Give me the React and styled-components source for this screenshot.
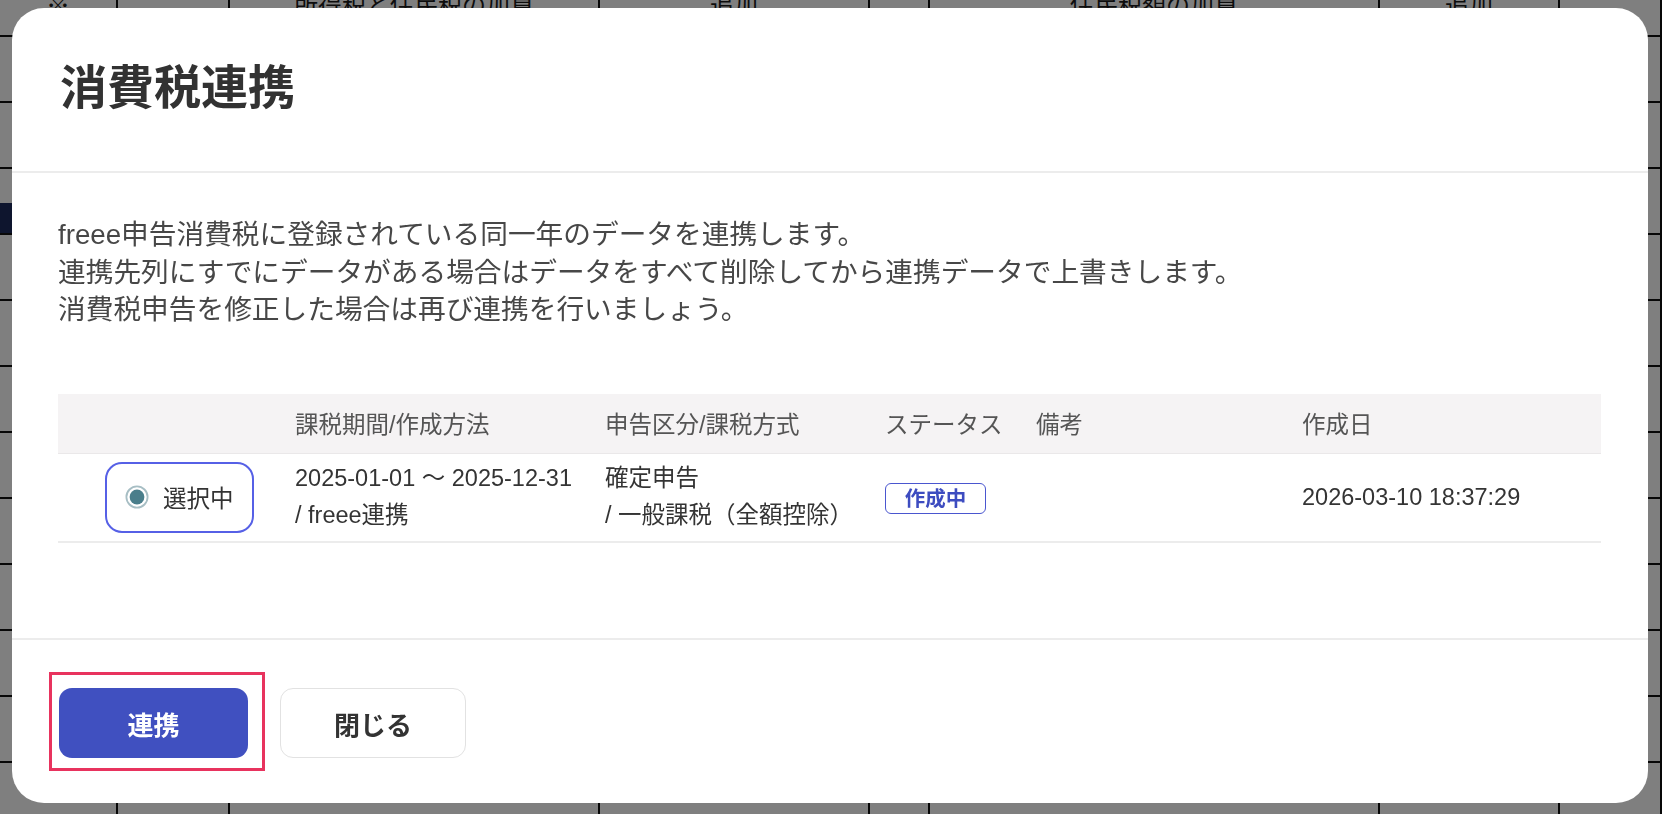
import React from 'react'
import styled, { createGlobalStyle } from 'styled-components'

const GlobalStyle = createGlobalStyle`
  html, body {
    margin: 0;
    padding: 0;
    background: #ffffff;
    overflow: hidden;
  }
  body {
    font-family: "Liberation Sans", "Noto Sans CJK JP", sans-serif;
  }
`

const bgRows = [
  ['※', '', '所得税と住民税の加算', '追加', '', '住民税額の加算', '追加', ''],
  ['', '', '', '', '', '', '', ''],
  ['', '', '', '', '', '', '', '0'],
  ['', '', '', '', '', '', '', ''],
  ['', '', '', '', '', '', '', ''],
  ['', '', '', '', '', '', '', ''],
  ['', '', '', '', '', '', '', ''],
  ['', '', '', '', '', '', '', ''],
  ['', '', '', '', '', '', '', ''],
  ['', '', '', '', '', '', '', ''],
  ['', '', '', '', '', '', '', ''],
  ['', '', '', '', '', '', '', ''],
  ['', '', '', '', '', '', '', ''],
]

export default function App() {
  return (
    <>
      <GlobalStyle />
      <Page>
        {bgRows.map((row, i) => (
          <BgRow key={i}>
            {row.map((txt, j) => (
              <BgCell key={j} $marker={i === 3 && j === 0}>{txt}</BgCell>
            ))}
          </BgRow>
        ))}
      </Page>

      <Overlay>
        <Modal>
          <Header>
            <Title>消費税連携</Title>
          </Header>

          <Body>
            <Intro>
              freee申告消費税に登録されている同一年のデータを連携します。<br />
              連携先列にすでにデータがある場合はデータをすべて削除してから連携データで上書きします。<br />
              消費税申告を修正した場合は再び連携を行いましょう。
            </Intro>

            <Table>
              <HeadRow>
                <HeadCell />
                <HeadCell>課税期間/作成方法</HeadCell>
                <HeadCell>申告区分/課税方式</HeadCell>
                <HeadCell>ステータス</HeadCell>
                <HeadCell>備考</HeadCell>
                <HeadCell>作成日</HeadCell>
              </HeadRow>

              <DataRow>
                <SelectCell>
                  <RadioPill>
                    <RadioIcon width="24" height="24" viewBox="0 0 24 24">
                      <circle cx="12" cy="12" r="10.6" fill="#fff" stroke="#a7bec4" strokeWidth="1.8" />
                      <circle cx="12" cy="12" r="7.4" fill="#4a7e8b" />
                    </RadioIcon>
                    選択中
                  </RadioPill>
                </SelectCell>
                <Cell>
                  2025-01-01 ～ 2025-12-31<br />
                  / freee連携
                </Cell>
                <Cell>
                  確定申告<br />
                  / 一般課税（全額控除）
                </Cell>
                <Cell>
                  <Badge>作成中</Badge>
                </Cell>
                <Cell />
                <Cell>2026-03-10 18:37:29</Cell>
              </DataRow>
            </Table>
          </Body>

          <Footer>
            <Focus>
              <Button $primary>連携</Button>
              <FocusRing />
            </Focus>
            <Button>閉じる</Button>
          </Footer>
        </Modal>
      </Overlay>
    </>
  )
}

const Page = styled.div`
  margin-top: -29px;
  display: flex;
  flex-direction: column;
`

const BgRow = styled.div`
  display: grid;
  grid-template-columns: 118px 112px 370px 270px 60px 450px 180px 1fr;
  height: 66px;
  border-bottom: 2px solid #111;
  box-sizing: border-box;
`

const BgCell = styled.div`
  display: flex;
  align-items: center;
  justify-content: center;
  border-right: 2px solid #111;
  font-size: 24px;
  color: #1a1a1a;
  background: ${p => (p.$marker ? 'linear-gradient(#1d2a5c, #1d2a5c) left bottom / 12px 30px no-repeat' : 'transparent')};

  &:last-child {
    justify-content: flex-start;
    padding-left: 12px;
  }
`

const Overlay = styled.div`
  position: fixed;
  inset: 0;
  background: rgba(0, 0, 0, 0.5);
  display: flex;
  padding: 8px 14px 11px 12px;
  box-sizing: border-box;
`

const Modal = styled.div`
  flex: 1;
  display: flex;
  flex-direction: column;
  background: #ffffff;
  border-radius: 32px;
  overflow: hidden;
`

const Header = styled.div`
  height: 165px;
  flex-shrink: 0;
  display: flex;
  align-items: center;
  padding: 0 48px 4px;
  border-bottom: 2px solid #ececec;
  box-sizing: border-box;
`

const Title = styled.h2`
  margin: 0;
  font-size: 47px;
  font-weight: 700;
  color: #323232;
  line-height: 1;
`

const Body = styled.div`
  flex: 1;
  padding: 43px 47px 0 46px;
`

const Intro = styled.p`
  margin: 0;
  font-size: 27.7px;
  line-height: 37.5px;
  color: #474747;
`

const Table = styled.div`
  margin-top: 65px;
`

const rowGrid = `
  display: grid;
  grid-template-columns: 237px 310px 280px 151px 266px 1fr;
  align-items: center;
  box-sizing: border-box;
`

const HeadRow = styled.div`
  ${rowGrid}
  height: 60px;
  background: #f5f3f4;
  border-bottom: 1px solid #eae8e9;
`

const HeadCell = styled.div`
  font-size: 23.5px;
  color: #555555;
`

const DataRow = styled.div`
  ${rowGrid}
  height: 89px;
  border-bottom: 2px solid #ececec;
`

const Cell = styled.div`
  font-size: 23.5px;
  line-height: 37px;
  color: #343434;
`

const SelectCell = styled.div`
  padding-left: 47px;
`

const RadioPill = styled.div`
  width: 149px;
  height: 71px;
  box-sizing: border-box;
  border: 2.5px solid #5660e6;
  border-radius: 17px;
  display: flex;
  align-items: center;
  padding-left: 18px;
  gap: 14px;
  font-size: 23.5px;
  color: #333333;
`

const RadioIcon = styled.svg`
  flex-shrink: 0;
`

const Badge = styled.span`
  display: inline-flex;
  align-items: center;
  justify-content: center;
  width: 101px;
  height: 31px;
  box-sizing: border-box;
  border: 1.5px solid #4a56cf;
  border-radius: 6px;
  font-size: 20.5px;
  font-weight: 700;
  color: #3d4cc0;
  vertical-align: middle;
`

const Footer = styled.div`
  height: 165px;
  flex-shrink: 0;
  display: flex;
  align-items: center;
  gap: 32px;
  padding: 3px 0 0 47px;
  border-top: 2px solid #ececec;
  box-sizing: border-box;
`

const Focus = styled.div`
  position: relative;
  display: flex;
`

const FocusRing = styled.div`
  position: absolute;
  top: -16px;
  left: -10px;
  right: -17px;
  bottom: -13px;
  border: 3px solid #e8335e;
  pointer-events: none;
`

const Button = styled.button`
  width: ${p => (p.$primary ? '189px' : '186px')};
  height: 70px;
  border-radius: 13px;
  border: ${p => (p.$primary ? 'none' : '1.5px solid #e2e2e2')};
  background: ${p => (p.$primary ? '#4050c0' : '#ffffff')};
  color: ${p => (p.$primary ? '#ffffff' : '#333333')};
  font-family: "Liberation Sans", "Noto Sans CJK JP", sans-serif;
  font-size: 26px;
  font-weight: 700;
  cursor: pointer;
`
